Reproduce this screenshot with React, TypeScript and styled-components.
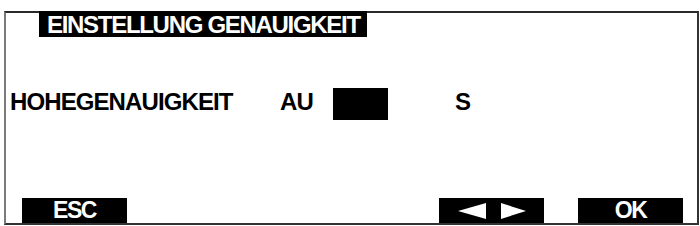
import React from "react";
import styled, { createGlobalStyle } from "styled-components";

const Global = createGlobalStyle`
  html, body { margin: 0; padding: 0; background: #fff; }
  body { font-family: "Liberation Sans", Arial, sans-serif; }
`;

const Page = styled.div`
  width: 700px;
  height: 226px;
  padding: 11px 0 0 4px;
  box-sizing: border-box;
  background: #fff;
`;

const Frame = styled.div`
  width: 695px;
  box-sizing: border-box;
  border-top: 2px solid #2a2a2a;
  border-right: 2px solid #333;
  border-bottom: 2px solid #333;
  border-left: 2px solid #7a7a7a;
  display: flex;
  flex-direction: column;
`;

const TitleBar = styled.div`
  margin: -2px 0 0 33px;
  width: 328px;
  height: 26px;
  background: #000;
  color: #fff;
  font-weight: 700;
  font-size: 24px;
  letter-spacing: -1.3px;
  line-height: 27px;
  padding-left: 8px;
  box-sizing: border-box;
  white-space: nowrap;
  overflow: hidden;
`;

const SettingRow = styled.div`
  margin-top: 51px;
  height: 32px;
  display: grid;
  grid-template-columns: 270px 53px 55px 67px auto;
  align-items: center;
  padding-left: 4px;
  font-weight: 700;
  font-size: 24px;
  letter-spacing: -0.9px;
  color: #000;
`;

const Label = styled.span`
  line-height: 24px;
  margin-top: -4px;
  white-space: nowrap;
`;

const ValueBlock = styled.div`
  width: 55px;
  height: 32px;
  background: #000;
`;

const SoftKeys = styled.div`
  margin-top: 78px;
  height: 25px;
  display: grid;
  grid-template-columns: repeat(5, 105px);
  column-gap: 34px;
  padding-left: 16px;
`;

const SoftKey = styled.div<{ $empty?: boolean }>`
  background: ${(p) => (p.$empty ? "transparent" : "#000")};
  color: #fff;
  font-weight: 700;
  font-size: 23px;
  letter-spacing: -1.5px;
  line-height: 25px;
  display: flex;
  align-items: center;
  justify-content: center;
  padding-top: 0;
  box-sizing: border-box;
`;

export default function App() {
  return (
    <Page>
      <Global />
      <Frame>
        <TitleBar>EINSTELLUNG GENAUIGKEIT</TitleBar>
        <SettingRow>
          <Label>HOHEGENAUIGKEIT</Label>
          <Label>AU</Label>
          <ValueBlock />
          <span />
          <Label>S</Label>
        </SettingRow>
        <SoftKeys>
          <SoftKey>ESC</SoftKey>
          <SoftKey $empty />
          <SoftKey $empty />
          <SoftKey>
            <svg width="68" height="16" viewBox="0 0 68 16">
              <polygon points="0,8 28,0 28,16" fill="#fff" />
              <polygon points="43,0 68,8 43,16" fill="#fff" />
            </svg>
          </SoftKey>
          <SoftKey>OK</SoftKey>
        </SoftKeys>
      </Frame>
    </Page>
  );
}
